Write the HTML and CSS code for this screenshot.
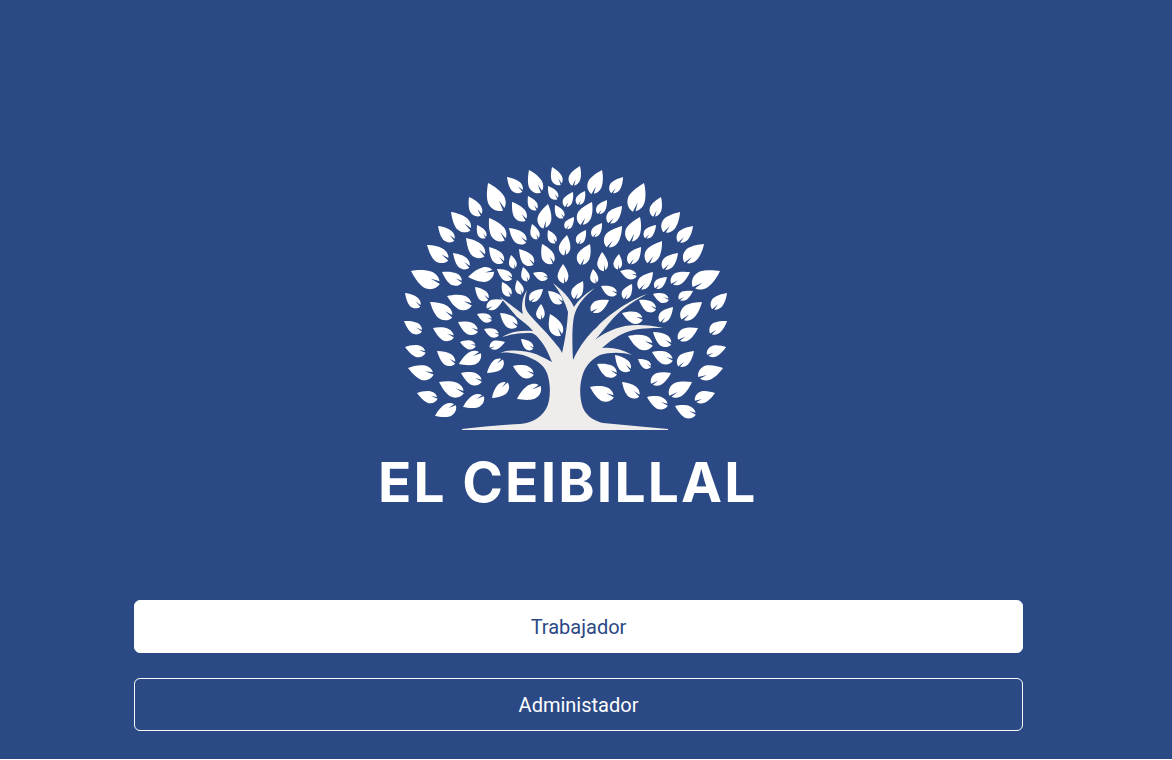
FILE: index.html
```html
<!DOCTYPE html>
<html lang="en">
<head>
    <meta charset="UTF-8">
    <meta name="viewport" content="width=device-width, initial-scale=1.0">
    <title>El Ceibillal</title>
    <link rel="stylesheet" href="styles.css">
</head>
<body>
    <div class="page">
        <div class="logo">
            <svg class="tree" viewBox="378 160 376 272" width="376" height="272" aria-hidden="true">
                <defs>
                    <path id="leaf" d="M.03 .05C.05 -.12 .2 -.27 .42 -.27C.65 -.24 .85 -.1 1 0C.85 .12 .62 .25 .42 .27C.28 .28 .14 .22 .08 .12L.36 .07Z"/>
                </defs>
                <path class="trunk" d="M462 429C480 427 500 425 520 424C530 423 540 419 546 409C551 400 551 384 547 373C543 364 537 360 523 355C515 353 508 352 500 353C508 350 515 350 522 351C530 352 536 353 552 362C548 352 545 346 540 340C536 335 534 333 530 333C525 333 515 333 502 337C510 332 520 330 533 331C528 325 522 321 517 317C511 310 505 303 500 297C510 304 518 311 523 314C521 308 522 297 527 290C525 298 524 304 526 309C528 315 540 325 550 337C555 343 560 348 562 353C564 345 567 330 568 312C565 302 560 292 553 283C562 290 570 298 574 307C578 301 583 295 595 288C585 296 578 304 575 313C572 322 572 340 573 360C580 345 588 335 597 327C605 318 625 302 647 294C630 303 618 312 610 322C604 329 600 334 595 340C602 334 612 329 625 326C638 324 650 325 663 328C650 328 640 328 630 331C618 335 610 341 602 348C612 347 622 349 632 355C622 352 610 352 600 355C590 360 584 368 582 377C579 388 580 400 583 408C587 417 595 421 603 423C625 425 645 427 668 429L668 430L462 430Z"/>
                <g class="leaves">
                    <use href="#leaf" transform="matrix(-8 -19 19 -8 560 186)"/>
                    <use href="#leaf" transform="matrix(9 -20 20 9 571 186)"/>
                    <use href="#leaf" transform="matrix(-11 -24 24 -11 540 194)"/>
                    <use href="#leaf" transform="matrix(-15 -16 16 -15 522 193)"/>
                    <use href="#leaf" transform="matrix(-14 -29 29 -14 502 212)"/>
                    <use href="#leaf" transform="matrix(-11 -20 20 -11 480 217)"/>
                    <use href="#leaf" transform="matrix(-19 -20 20 -19 470 232)"/>
                    <use href="#leaf" transform="matrix(-16 -16 16 -16 454 242)"/>
                    <use href="#leaf" transform="matrix(-21 -17 17 -21 448 262)"/>
                    <use href="#leaf" transform="matrix(-29 -15 15 -29 440 286)"/>
                    <use href="#leaf" transform="matrix(-20 -12 12 -20 462 284)"/>
                    <use href="#leaf" transform="matrix(-16 -16 16 -16 469 269)"/>
                    <use href="#leaf" transform="matrix(-18 -20 20 -18 484 258)"/>
                    <use href="#leaf" transform="matrix(-8 -14 14 -8 485 239)"/>
                    <use href="#leaf" transform="matrix(-15 -24 24 -15 504 242)"/>
                    <use href="#leaf" transform="matrix(-17 -16 16 -17 526 244)"/>
                    <use href="#leaf" transform="matrix(-13 -20 20 -13 525 222)"/>
                    <use href="#leaf" transform="matrix(-8 -15 15 -8 536 211)"/>
                    <use href="#leaf" transform="matrix(-9 -14 14 -9 557 200)"/>
                    <use href="#leaf" transform="matrix(9 -15 15 9 564 207)"/>
                    <use href="#leaf" transform="matrix(6 -25 25 6 542 229)"/>
                    <use href="#leaf" transform="matrix(-8 -14 14 -8 563 219)"/>
                    <use href="#leaf" transform="matrix(9 -12 12 9 565 229)"/>
                    <use href="#leaf" transform="matrix(-5 -16 16 -5 537 240)"/>
                    <use href="#leaf" transform="matrix(-7 -14 14 -7 555 244)"/>
                    <use href="#leaf" transform="matrix(4 -21 21 4 563 256)"/>
                    <use href="#leaf" transform="matrix(-10 -21 21 -10 552 265)"/>
                    <use href="#leaf" transform="matrix(-14 -17 17 -14 533 266)"/>
                    <use href="#leaf" transform="matrix(-14 -17 17 -14 503 264)"/>
                    <use href="#leaf" transform="matrix(-3 -14 14 -3 514 269)"/>
                    <use href="#leaf" transform="matrix(-27 4 -4 -27 495 273)"/>
                    <use href="#leaf" transform="matrix(-15 -11 11 -15 512 280)"/>
                    <use href="#leaf" transform="matrix(-4 -15 15 -4 527 282)"/>
                    <use href="#leaf" transform="matrix(-15 -6 6 -15 548 279)"/>
                    <use href="#leaf" transform="matrix(0 -20 20 0 563 284)"/>
                    <use href="#leaf" transform="matrix(-4 -15 15 -4 521 295)"/>
                    <use href="#leaf" transform="matrix(-8 -15 15 -8 510 297)"/>
                    <use href="#leaf" transform="matrix(-13 -14 14 -13 488 301)"/>
                    <use href="#leaf" transform="matrix(14 -12 12 14 529 301)"/>
                    <use href="#leaf" transform="matrix(-14 -13 13 -14 562 304)"/>
                    <use href="#leaf" transform="matrix(10 -18 18 10 573 299)"/>
                    <use href="#leaf" transform="matrix(12 -24 24 12 590 194)"/>
                    <use href="#leaf" transform="matrix(13 -16 16 13 610 193)"/>
                    <use href="#leaf" transform="matrix(13 -29 29 13 631 212)"/>
                    <use href="#leaf" transform="matrix(9 -20 20 9 652 217)"/>
                    <use href="#leaf" transform="matrix(18 -20 20 18 662 232)"/>
                    <use href="#leaf" transform="matrix(16 -16 16 16 677 242)"/>
                    <use href="#leaf" transform="matrix(21 -18 18 21 683 262)"/>
                    <use href="#leaf" transform="matrix(29 -15 15 29 691 286)"/>
                    <use href="#leaf" transform="matrix(20 -11 11 20 670 283)"/>
                    <use href="#leaf" transform="matrix(16 -16 16 16 662 269)"/>
                    <use href="#leaf" transform="matrix(16 -22 22 16 646 263)"/>
                    <use href="#leaf" transform="matrix(12 -13 13 12 644 238)"/>
                    <use href="#leaf" transform="matrix(12 -25 25 12 628 242)"/>
                    <use href="#leaf" transform="matrix(17 -21 21 17 605 247)"/>
                    <use href="#leaf" transform="matrix(15 -17 17 15 607 223)"/>
                    <use href="#leaf" transform="matrix(10 -14 14 10 597 214)"/>
                    <use href="#leaf" transform="matrix(13 -23 23 13 579 225)"/>
                    <use href="#leaf" transform="matrix(8 -14 14 8 577 205)"/>
                    <use href="#leaf" transform="matrix(10 -14 14 10 592 237)"/>
                    <use href="#leaf" transform="matrix(9 -14 14 9 577 244)"/>
                    <use href="#leaf" transform="matrix(11 -21 21 11 579 265)"/>
                    <use href="#leaf" transform="matrix(-1 -20 20 -1 603 272)"/>
                    <use href="#leaf" transform="matrix(2 -16 16 2 617 270)"/>
                    <use href="#leaf" transform="matrix(13 -17 17 13 628 264)"/>
                    <use href="#leaf" transform="matrix(-17 -6 6 -17 637 277)"/>
                    <use href="#leaf" transform="matrix(15 -17 17 15 638 289)"/>
                    <use href="#leaf" transform="matrix(13 -11 11 13 654 288)"/>
                    <use href="#leaf" transform="matrix(15 -8 8 15 678 299)"/>
                    <use href="#leaf" transform="matrix(16 -16 16 16 711 309)"/>
                    <use href="#leaf" transform="matrix(-2 -15 15 -2 595 284)"/>
                    <use href="#leaf" transform="matrix(-16 -9 9 -16 617 295)"/>
                    <use href="#leaf" transform="matrix(9 -15 15 9 623 299)"/>
                    <use href="#leaf" transform="matrix(-16 -7 7 -16 669 301)"/>
                    <use href="#leaf" transform="matrix(19 -11 11 19 590 311)"/>
                    <use href="#leaf" transform="matrix(-17 -11 11 -17 656 311)"/>
                    <use href="#leaf" transform="matrix(22 -17 17 22 680 319)"/>
                    <use href="#leaf" transform="matrix(14 -15 15 14 659 322)"/>
                    <use href="#leaf" transform="matrix(-21 -8 8 -21 643 321)"/>
                    <use href="#leaf" transform="matrix(21 -11 11 21 677 339)"/>
                    <use href="#leaf" transform="matrix(18 -12 12 18 709 333)"/>
                    <use href="#leaf" transform="matrix(-18 -14 14 -18 671 346)"/>
                    <use href="#leaf" transform="matrix(-25 -11 11 -25 653 347)"/>
                    <use href="#leaf" transform="matrix(20 -7 7 20 706 354)"/>
                    <use href="#leaf" transform="matrix(17 -15 15 17 677 366)"/>
                    <use href="#leaf" transform="matrix(-21 -10 10 -21 673 362)"/>
                    <use href="#leaf" transform="matrix(26 -8 8 26 697 376)"/>
                    <use href="#leaf" transform="matrix(-13 -9 9 -13 651 368)"/>
                    <use href="#leaf" transform="matrix(-15 -17 17 -15 630 372)"/>
                    <use href="#leaf" transform="matrix(-20 -12 12 -20 617 376)"/>
                    <use href="#leaf" transform="matrix(21 -10 10 21 650 383)"/>
                    <use href="#leaf" transform="matrix(24 -13 13 24 668 395)"/>
                    <use href="#leaf" transform="matrix(21 -7 7 21 694 400)"/>
                    <use href="#leaf" transform="matrix(-21 -10 10 -21 668 407)"/>
                    <use href="#leaf" transform="matrix(-21 -10 10 -21 696 416)"/>
                    <use href="#leaf" transform="matrix(-17 -16 16 -17 639 398)"/>
                    <use href="#leaf" transform="matrix(-24 -12 12 -24 614 399)"/>
                    <use href="#leaf" transform="matrix(-15 -15 15 -15 420 308)"/>
                    <use href="#leaf" transform="matrix(-22 -17 17 -22 452 319)"/>
                    <use href="#leaf" transform="matrix(-25 -11 11 -25 472 307)"/>
                    <use href="#leaf" transform="matrix(17 -8 8 17 486 308)"/>
                    <use href="#leaf" transform="matrix(-15 -7 7 -15 492 321)"/>
                    <use href="#leaf" transform="matrix(-17 -15 15 -17 517 328)"/>
                    <use href="#leaf" transform="matrix(-18 -12 12 -18 422 333)"/>
                    <use href="#leaf" transform="matrix(-21 -11 11 -21 454 339)"/>
                    <use href="#leaf" transform="matrix(-20 -11 11 -20 478 333)"/>
                    <use href="#leaf" transform="matrix(-15 -7 7 -15 499 336)"/>
                    <use href="#leaf" transform="matrix(-16 -5 5 -16 476 347)"/>
                    <use href="#leaf" transform="matrix(16 -5 5 16 489 347)"/>
                    <use href="#leaf" transform="matrix(-12 -11 11 -12 533 350)"/>
                    <use href="#leaf" transform="matrix(-21 -7 7 -21 426 354)"/>
                    <use href="#leaf" transform="matrix(-18 -14 14 -18 455 365)"/>
                    <use href="#leaf" transform="matrix(-23 10 -10 -23 482 354)"/>
                    <use href="#leaf" transform="matrix(-17 13 -13 -17 504 360)"/>
                    <use href="#leaf" transform="matrix(-21 -10 10 -21 534 376)"/>
                    <use href="#leaf" transform="matrix(-26 -8 8 -26 434 376)"/>
                    <use href="#leaf" transform="matrix(-21 -10 10 -21 482 383)"/>
                    <use href="#leaf" transform="matrix(-25 -13 13 -25 464 395)"/>
                    <use href="#leaf" transform="matrix(-21 -7 7 -21 438 400)"/>
                    <use href="#leaf" transform="matrix(-17 15 -15 -17 509 383)"/>
                    <use href="#leaf" transform="matrix(-25 12 -12 -25 542 387)"/>
                    <use href="#leaf" transform="matrix(-22 10 -10 -22 485 397)"/>
                    <use href="#leaf" transform="matrix(-22 10 -10 -22 457 406)"/>
                    <use href="#leaf" transform="matrix(1 -16 16 1 540 320)"/>
                    <use href="#leaf" transform="matrix(-10 -23 23 -10 560 337)"/>
                </g>
            </svg>
            <h1 class="brand">EL CEIBILLAL</h1>
        </div>

        <div class="actions">
            <button type="button" class="btn btn-solid">Trabajador</button>
            <button type="button" class="btn btn-outline">Administador</button>
        </div>
    </div>
</body>
</html>
```

FILE: styles.css
```css
body {
    margin: 0;
    background-color: #fff;
    font-family: Roboto, sans-serif;
}
.page {
    height: 759px;
    background-color: #2b4984;
    overflow: hidden;
}
.logo {
    width: 376px;
    margin-left: 378px;
    padding-top: 160px;
}
.tree {
    display: block;
}
.trunk {
    fill: #eeedeb;
}
.leaves {
    fill: #fff;
}
.brand {
    margin: 17px 0 0;
    color: #fff;
    font-family: Inter, sans-serif;
    font-size: 55px;
    font-weight: 700;
    letter-spacing: 2.2px;
    line-height: 66px;
    white-space: nowrap;
}
.actions {
    display: flex;
    flex-direction: column;
    gap: 25px;
    width: 889px;
    margin: 85px 0 0 134px;
}
.btn {
    height: 53px;
    padding: 0;
    border: 1px solid #fff;
    border-radius: 6px;
    font-family: Roboto, sans-serif;
    font-size: 20px;
    cursor: pointer;
}
.btn-solid {
    background-color: #fff;
    color: #2b4984;
}
.btn-outline {
    background-color: transparent;
    color: #fff;
}
```
